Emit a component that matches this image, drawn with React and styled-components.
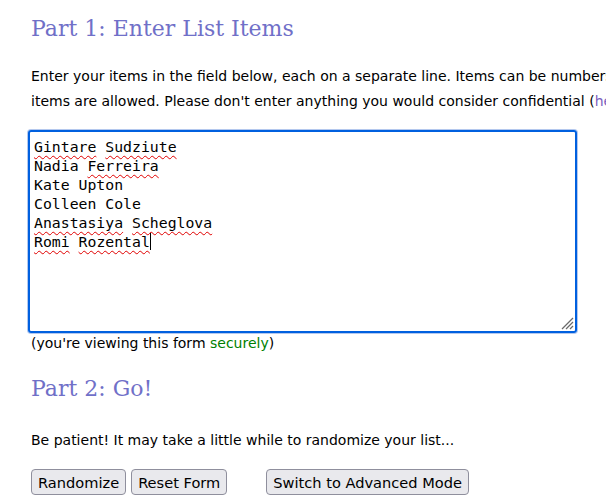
import React from "react";
import styled, { createGlobalStyle } from "styled-components";

const Global = createGlobalStyle`
  html, body { margin: 0; padding: 0; background: #fff; overflow: hidden; }
  body { width: 606px; height: 502px; }
`;

const Page = styled.div`
  width: 760px;
  padding: 14px 0 0 31px;
  font-family: "DejaVu Sans", Tahoma, sans-serif;
  font-size: 14px;
  color: #000;
`;

const Heading = styled.h2`
  margin: 0;
  font-family: "DejaVu Serif", Georgia, serif;
  font-weight: normal;
  font-size: 22px;
  line-height: 30px;
  color: #7070c8;
  margin-top: ${(p) => p.$top || 0}px;
`;

const Para = styled.p`
  margin: ${(p) => p.$top || 0}px 0 0 0;
  line-height: 25px;
  white-space: nowrap;
`;

const Link = styled.a`
  color: ${(p) => p.$color};
  text-decoration: none;
`;

const Field = styled.div`
  position: relative;
  box-sizing: border-box;
  margin: 16px 0 0 -3px;
  width: 549px;
  height: 203px;
  border: 2px solid #0060df;
  border-radius: 3px;
  box-shadow: 0 0 0 1px #b4c8ee;
  padding: 5px 0 0 4px;
  font-family: "DejaVu Sans Mono", Consolas, monospace;
  font-size: 14.8px;
  line-height: 19px;
  color: #000;
`;

const Line = styled.div`
  white-space: pre;
`;

const Miss = styled.span`
  text-decoration: underline wavy #e00000;
  text-decoration-thickness: 1px;
  text-underline-offset: 3px;
  text-decoration-skip-ink: none;
`;

const Caret = styled.span`
  display: inline-block;
  width: 1px;
  height: 17px;
  background: #000;
  vertical-align: -3px;
`;

const Grip = styled.svg`
  position: absolute;
  right: 1px;
  bottom: 1px;
`;

const Note = styled.div`
  margin-top: 0;
  line-height: 20px;
`;

const Buttons = styled.div`
  display: flex;
  align-items: center;
  margin-top: 16px;
`;

const Button = styled.button`
  height: 26px;
  padding: 0 6px;
  margin-left: ${(p) => p.$gap || 0}px;
  border: 1px solid #8f8f9d;
  border-radius: 4px;
  background: #e9e9ed;
  font-family: "DejaVu Sans", Tahoma, sans-serif;
  font-size: 14.6px;
  color: #000;
`;

export default function App() {
  return (
    <>
      <Global />
      <Page>
        <Heading>Part 1: Enter List Items</Heading>
        <Para $top={20}>
          Enter your items in the field below, each on a separate line. Items can be numbers, names, email addresses, etc.
          <br />
          items are allowed. Please don't enter anything you would consider confidential (
          <Link href="#" $color="#7b5fc0">here's why</Link>).
        </Para>
        <Field>
          <Line><Miss>Gintare</Miss> <Miss>Sudziute</Miss></Line>
          <Line>Nadia <Miss>Ferreira</Miss></Line>
          <Line>Kate Upton</Line>
          <Line>Colleen Cole</Line>
          <Line><Miss>Anastasiya</Miss> <Miss>Scheglova</Miss></Line>
          <Line><Miss>Romi</Miss> <Miss>Rozental</Miss><Caret /></Line>
          <Grip width="14" height="14" viewBox="0 0 14 14">
            <g stroke="#6b6b6b" strokeWidth="1.2">
              <line x1="2" y1="13" x2="13" y2="2" />
              <line x1="6" y1="13" x2="13" y2="6" />
              <line x1="10" y1="13" x2="13" y2="10" />
            </g>
          </Grip>
        </Field>
        <Note>
          (you're viewing this form <Link href="#" $color="#008000">securely</Link>)
        </Note>
        <Heading $top={21}>Part 2: Go!</Heading>
        <Para $top={24}>Be patient! It may take a little while to randomize your list...</Para>
        <Buttons>
          <Button>Randomize</Button>
          <Button $gap={5}>Reset Form</Button>
          <Button $gap={39}>Switch to Advanced Mode</Button>
        </Buttons>
      </Page>
    </>
  );
}
